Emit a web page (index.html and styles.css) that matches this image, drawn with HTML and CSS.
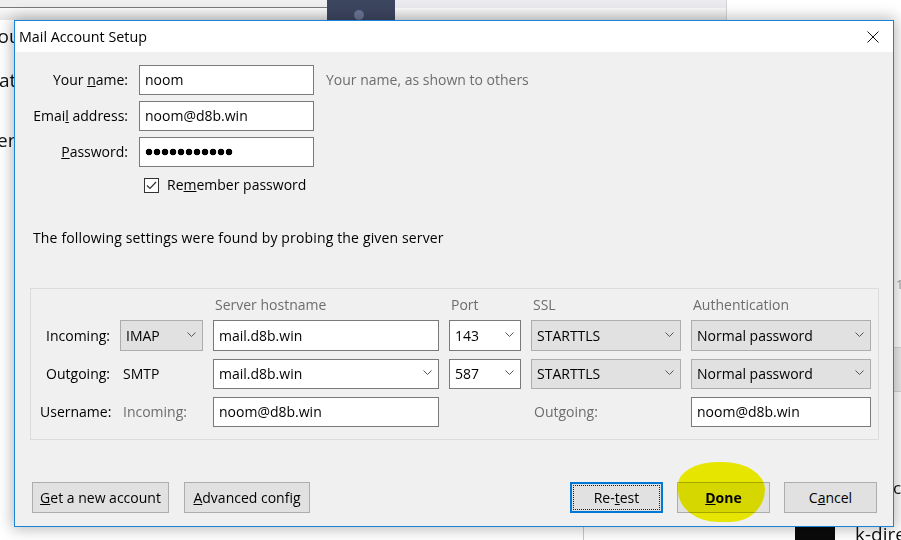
FILE: index.html
```html
<!DOCTYPE html>
<html>
<head>
<meta charset="utf-8">
<title>Mail Account Setup</title>
<link rel="stylesheet" href="styles.css">
</head>
<body>
<div class="desk">
  <div class="desk-top-left"></div>
  <div class="desk-avatar"><span class="desk-dot"></span></div>
  <div class="desk-top-mid"></div>
  <div class="desk-sep"></div>
  <div class="desk-text dt1">You</div>
  <div class="desk-text dt2">at</div>
  <div class="desk-text dt3">end</div>
  <div class="desk-num">1</div>
  <div class="desk-band"></div>
  <div class="desk-text dt4">ce</div>
  <div class="desk-vline"></div>
  <div class="desk-black"></div>
  <div class="desk-text dt5">k-direc</div>
</div>

<div class="dialog">
  <div class="titlebar">
    <span class="title">Mail Account Setup</span>
    <svg class="close" width="12" height="12" viewBox="0 0 12 12"><path d="M0.5 0.5 L11.5 11.5 M11.5 0.5 L0.5 11.5" stroke="#111" stroke-width="1" fill="none"/></svg>
  </div>
  <div class="content">
    <div class="form">
      <span class="lbl">Your <u>n</u>ame:</span>
      <div class="field">noom</div>
      <span class="hint">Your name, as shown to others</span>

      <span class="lbl">Emai<u>l</u> address:</span>
      <div class="field">noom@d8b.win</div>
      <span></span>

      <span class="lbl"><u>P</u>assword:</span>
      <div class="field"><span class="dots"></span></div>
      <span></span>

      <div class="remember">
        <svg class="cb" width="15" height="15" viewBox="0 0 15 15"><rect x="0.5" y="0.5" width="14" height="14" fill="#fff" stroke="#333"/><path d="M3 7.5 L6 10.5 L12 4" fill="none" stroke="#333" stroke-width="1.2"/></svg>
        <span>Re<u>m</u>ember password</span>
      </div>
    </div>

    <div class="found">The following settings were found by probing the given server</div>

    <div class="group">
      <div class="grid head">
        <span></span><span></span>
        <span class="colhead">Server hostname</span>
        <span class="colhead">Port</span>
        <span class="colhead">SSL</span>
        <span class="colhead">Authentication</span>
      </div>
      <div class="grid rows">
        <span class="rlbl">Incoming:</span>
        <div class="select gray">IMAP<svg class="chev" width="9" height="5" viewBox="0 0 9 5"><path d="M0.5 0.5 L4.5 4.5 L8.5 0.5" fill="none" stroke="#555"/></svg></div>
        <div class="field">mail.d8b.win</div>
        <div class="select white">143<svg class="chev" width="9" height="5" viewBox="0 0 9 5"><path d="M0.5 0.5 L4.5 4.5 L8.5 0.5" fill="none" stroke="#555"/></svg></div>
        <div class="select gray">STARTTLS<svg class="chev" width="9" height="5" viewBox="0 0 9 5"><path d="M0.5 0.5 L4.5 4.5 L8.5 0.5" fill="none" stroke="#555"/></svg></div>
        <div class="select gray">Normal password<svg class="chev" width="9" height="5" viewBox="0 0 9 5"><path d="M0.5 0.5 L4.5 4.5 L8.5 0.5" fill="none" stroke="#555"/></svg></div>

        <span class="rlbl">Outgoing:</span>
        <span class="plain">SMTP</span>
        <div class="select white">mail.d8b.win<svg class="chev" width="9" height="5" viewBox="0 0 9 5"><path d="M0.5 0.5 L4.5 4.5 L8.5 0.5" fill="none" stroke="#555"/></svg></div>
        <div class="select white">587<svg class="chev" width="9" height="5" viewBox="0 0 9 5"><path d="M0.5 0.5 L4.5 4.5 L8.5 0.5" fill="none" stroke="#555"/></svg></div>
        <div class="select gray">STARTTLS<svg class="chev" width="9" height="5" viewBox="0 0 9 5"><path d="M0.5 0.5 L4.5 4.5 L8.5 0.5" fill="none" stroke="#555"/></svg></div>
        <div class="select gray">Normal password<svg class="chev" width="9" height="5" viewBox="0 0 9 5"><path d="M0.5 0.5 L4.5 4.5 L8.5 0.5" fill="none" stroke="#555"/></svg></div>

        <span class="rlbl">Username:</span>
        <span class="plain muted">Incoming:</span>
        <div class="field">noom@d8b.win</div>
        <span></span>
        <span class="plain muted">Outgoing:</span>
        <div class="field">noom@d8b.win</div>
      </div>
    </div>

    <div class="buttons">
      <div class="btn w-get"><u>G</u>et a new account</div>
      <div class="btn w-adv"><u>A</u>dvanced config</div>
      <div class="btn w-std retest"><span>Re-<u>t</u>est</span></div>
      <div class="btn w-std done"><b><u>D</u>one</b><span class="highlight"></span></div>
      <div class="btn w-std cancel">C<u>a</u>ncel</div>
    </div>
  </div>
</div>
</body>
</html>
```

FILE: styles.css
```css
* { box-sizing: border-box; }
html, body { margin: 0; padding: 0; }
body {
  width: 901px;
  height: 540px;
  position: relative;
  overflow: hidden;
  background: #fff;
  font-family: "Open Sans", "Noto Sans", sans-serif;
  font-size: 14px;
  line-height: 20px;
  color: #000;
}

/* background desktop */
.desk { position: absolute; inset: 0; }
.desk-top-left {
  position: absolute; left: 0; top: 0; width: 327px; height: 20px;
  background: linear-gradient(#efefef 0 7px, #7a7a7a 7px 8px, #fafafa 8px, #e6e6e6 20px);
}
.desk-avatar {
  position: absolute; left: 327px; top: 0; width: 68px; height: 20px;
  background: #3c465f;
}
.desk-dot {
  position: absolute; left: 27px; top: 10px; width: 10px; height: 10px;
  border-radius: 50%; background: #6b7593;
}
.desk-top-mid {
  position: absolute; left: 395px; top: 0; width: 331px; height: 20px;
  background: linear-gradient(#ebebef 0 8px, #f8f8f8 8px, #e8e8e8 20px);
}
.desk-sep {
  position: absolute; left: 726px; top: 0; width: 1px; height: 20px; background: #d4d4d4;
}
.desk-text { position: absolute; font-size: 19px; line-height: 24px; color: #111; white-space: nowrap; }
.dt1 { left: -13px; top: 24px; }
.dt2 { left: -1px; top: 68px; }
.dt3 { left: -3px; top: 128px; }
.dt4 { left: 893px; top: 476px; font-size: 17px; }
.dt5 { left: 855px; top: 522px; font-size: 19px; }
.desk-num { position: absolute; left: 896px; top: 274px; color: #999; font-size: 13px; }
.desk-band {
  position: absolute; left: 893px; top: 347px; width: 8px; height: 45px;
  background: #ececec; border-top: 1px solid #d8d8d8; border-bottom: 1px solid #d8d8d8;
}
.desk-vline { position: absolute; left: 583px; top: 526px; width: 1px; height: 14px; background: #c8c8c8; }
.desk-black { position: absolute; left: 795px; top: 527px; width: 40px; height: 13px; background: #0a0a0a; }

/* dialog window */
.dialog {
  position: absolute;
  left: 14px;
  top: 20px;
  width: 880px;
  height: 507px;
  border: 1px solid #1883d7;
  background: #f0f0f0;
  box-shadow: 0 0 14px 2px rgba(0, 0, 0, 0.28);
  display: flex;
  flex-direction: column;
}
.titlebar {
  height: 31px;
  flex: none;
  background: #fff;
  display: flex;
  align-items: center;
  justify-content: space-between;
  padding: 0 14px 0 4px;
  font-size: 14.3px;
}
.title { color: #000; }
.close { display: block; }

.content {
  flex: 1;
  display: flex;
  flex-direction: column;
  padding-top: 13px;
}

.form {
  display: grid;
  grid-template-columns: 113px 175px auto;
  column-gap: 11px;
  row-gap: 6px;
  align-items: center;
}
.lbl { text-align: right; }
.hint { color: #6d6d6d; padding-left: 1px; }
.field {
  height: 30px;
  background: #fff;
  border: 1px solid #7a7a7a;
  padding-left: 5px;
  display: flex;
  align-items: center;
  white-space: nowrap;
}
.dots {
  display: block;
  width: 88px;
  height: 8px;
  background: radial-gradient(circle at 4px 4px, #000 0 3.1px, transparent 3.6px) 0 0 / 8px 8px repeat-x;
}
.remember {
  grid-column: 2 / 4;
  margin-top: 2px;
  padding-left: 5px;
  display: flex;
  align-items: center;
  gap: 8px;
}
.cb { display: block; }

.found { margin: 33px 0 0 18px; letter-spacing: 0.15px; }

.group {
  margin: 40px 14px 0 15px;
  border: 1px solid #dcdcdc;
  padding: 6px 6px 12px 9px;
}
.grid {
  display: grid;
  grid-template-columns: 70px 83px 226px 72px 150px 180px;
  column-gap: 10px;
}
.head { height: 20px; margin-bottom: 5px; }
.colhead { color: #6d6d6d; padding-left: 2px; white-space: nowrap; }
.rows {
  grid-template-rows: 31px 30px 30px;
  row-gap: 8px;
  align-items: stretch;
}
.rows .field { height: auto; }
.rlbl { text-align: right; align-self: center; white-space: nowrap; }
.plain { align-self: center; padding-left: 3px; white-space: nowrap; }
.muted { color: #6d6d6d; }
.select {
  display: flex;
  align-items: center;
  justify-content: space-between;
  padding: 0 6px 0 5px;
  white-space: nowrap;
}
.select.gray { background: #e1e1e1; border: 1px solid #adadad; }
.select.white { background: #fff; border: 1px solid #7a7a7a; }
.chev { display: block; margin-top: -3px; flex: none; }

.buttons {
  display: flex;
  margin-top: 42px;
  padding: 0 16px 0 17px;
}
.btn {
  height: 31px;
  background: #e1e1e1;
  border: 1px solid #adadad;
  display: flex;
  align-items: center;
  justify-content: center;
  white-space: nowrap;
  position: relative;
}
.w-get { width: 137px; }
.w-adv { width: 126px; margin-left: 15px; }
.w-std { width: 93px; }
.retest {
  margin-left: auto;
  border: 2px solid #0078d7;
  outline: 1px dotted #222;
  outline-offset: -4px;
}
.done { margin-left: 14px; }
.cancel { margin-left: 14px; }
.highlight {
  position: absolute;
  left: 0px;
  top: -21px;
  width: 87px;
  height: 60px;
  background: #f4f400;
  mix-blend-mode: multiply;
  border-radius: 48% 52% 42% 50% / 40% 48% 58% 55%;
  pointer-events: none;
}
```
